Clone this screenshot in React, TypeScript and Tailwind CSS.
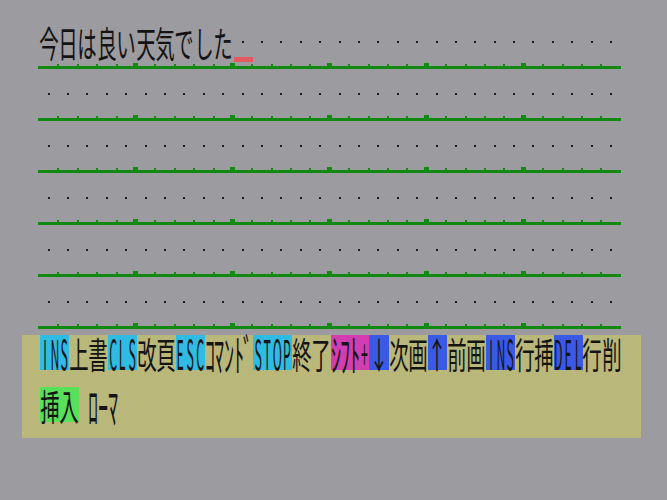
import React from "react";

type K = "f" | "h" | "l";
type GProps = { ch: string; k: K };

function G({ ch, k }: GProps) {
  const inner =
    k === "l"
      ? "inline-block leading-none text-[41px] scale-x-[0.3]"
      : k === "h"
        ? "inline-block leading-none text-[44px] scale-x-[0.46]"
        : "inline-block leading-none text-[36px] scale-x-[0.54]";
  return (
    <span
      className={
        k === "f"
          ? "flex shrink-0 w-[19.4px] h-[35px] items-center justify-center overflow-visible"
          : "flex shrink-0 w-[9.7px] h-[35px] items-center justify-center overflow-visible"
      }
    >
      <span className={inner}>{ch}</span>
    </span>
  );
}

function Dot({ cursor }: { cursor?: boolean }) {
  return (
    <span className="relative flex shrink-0 w-[19.4px] h-[35px] items-center justify-center">
      <span className="block w-[2px] h-[2px] bg-[#1c1c1c]" />
      {cursor && (
        <span className="absolute left-[1px] right-[-1px] bottom-[-3px] h-[5px] bg-[#e45a5e]" />
      )}
    </span>
  );
}

function Ruler() {
  const cells = Array.from({ length: 30 }, (_, i) => i);
  return (
    <div className="flex flex-col mt-[5px]">
      <div className="flex h-[2px]">
        {cells.map((i) => (
          <span key={i} className="flex shrink-0 w-[19.4px] h-[2px] justify-end items-end">
            {i < 29 &&
              (i % 5 === 4 ? (
                <span className="block w-[5px] h-[3px] mr-[-2.5px] bg-[#128a12]" />
              ) : (
                <span className="block w-[2px] h-[2px] mr-[-1px] bg-[#128a12]" />
              ))}
          </span>
        ))}
      </div>
      <div className="h-[3px] w-[583px] ml-[-1px] bg-[#128a12]" />
    </div>
  );
}

function Row({ children }: { children: React.ReactNode }) {
  return (
    <div className="flex flex-col h-[52px]">
      <div className="flex h-[35px]">{children}</div>
      <Ruler />
    </div>
  );
}

function Segment({ chars, bg }: { chars: { ch: string; k: K }[]; bg: string }) {
  return (
    <span className={"flex h-[35px] " + bg}>
      {chars.map((c, i) => (
        <G key={i} ch={c.ch} k={c.k} />
      ))}
    </span>
  );
}

function split(s: string): { ch: string; k: K }[] {
  return Array.from(s).map((ch) => {
    if (/[A-Za-z+]/.test(ch)) return { ch, k: "l" as const };
    const code = ch.charCodeAt(0);
    if (code >= 0xff61 && code <= 0xff9f) return { ch, k: "h" as const };
    return { ch, k: "f" as const };
  });
}

export default function App() {
  const title = Array.from("今日は良い天気でした");
  const segs: { s: string; bg: string }[] = [
    { s: "INS", bg: "bg-[#30bce2]" },
    { s: "上書", bg: "" },
    { s: "CLS", bg: "bg-[#30bce2]" },
    { s: "改頁", bg: "" },
    { s: "ESC", bg: "bg-[#30bce2]" },
    { s: "ｺﾏﾝﾄﾞ", bg: "" },
    { s: "STOP", bg: "bg-[#30bce2]" },
    { s: "終了", bg: "" },
    { s: "ｼﾌﾄ+", bg: "bg-[#d23eb2]" },
    { s: "↓", bg: "bg-[#3a5ae6]" },
    { s: "次画", bg: "" },
    { s: "↑", bg: "bg-[#3a5ae6]" },
    { s: "前画", bg: "" },
    { s: "INS", bg: "bg-[#3a5ae6]" },
    { s: "行挿", bg: "" },
    { s: "DEL", bg: "bg-[#3a5ae6]" },
    { s: "行削", bg: "" },
  ];
  return (
    <div className="w-[667px] h-[500px] overflow-hidden bg-[#9c9ba0] text-[#141414] font-['Noto_Sans_CJK_JP',sans-serif] pt-[24px]">
      <div className="flex flex-col pl-[39px]">
        <Row>
          {title.map((c, i) => (
            <G key={i} ch={c} k="f" />
          ))}
          <Dot cursor />
          {Array.from({ length: 19 }, (_, i) => (
            <Dot key={i} />
          ))}
        </Row>
        {[0, 1, 2, 3, 4].map((r) => (
          <Row key={r}>
            {Array.from({ length: 30 }, (_, i) => (
              <Dot key={i} />
            ))}
          </Row>
        ))}
      </div>
      <div className="ml-[22px] mt-[-1px] w-[619px] h-[103px] bg-[#bab77a] pl-[18px] flex flex-col gap-[17px]">
        <div className="flex">
          {segs.map((sg, i) => (
            <Segment key={i} chars={split(sg.s)} bg={sg.bg} />
          ))}
        </div>
        <div className="flex">
          <Segment chars={split("挿入")} bg="bg-[#58e05a]" />
          <span className="w-[9.7px]" />
          <Segment chars={split("ﾛｰﾏ")} bg="" />
        </div>
      </div>
    </div>
  );
}
